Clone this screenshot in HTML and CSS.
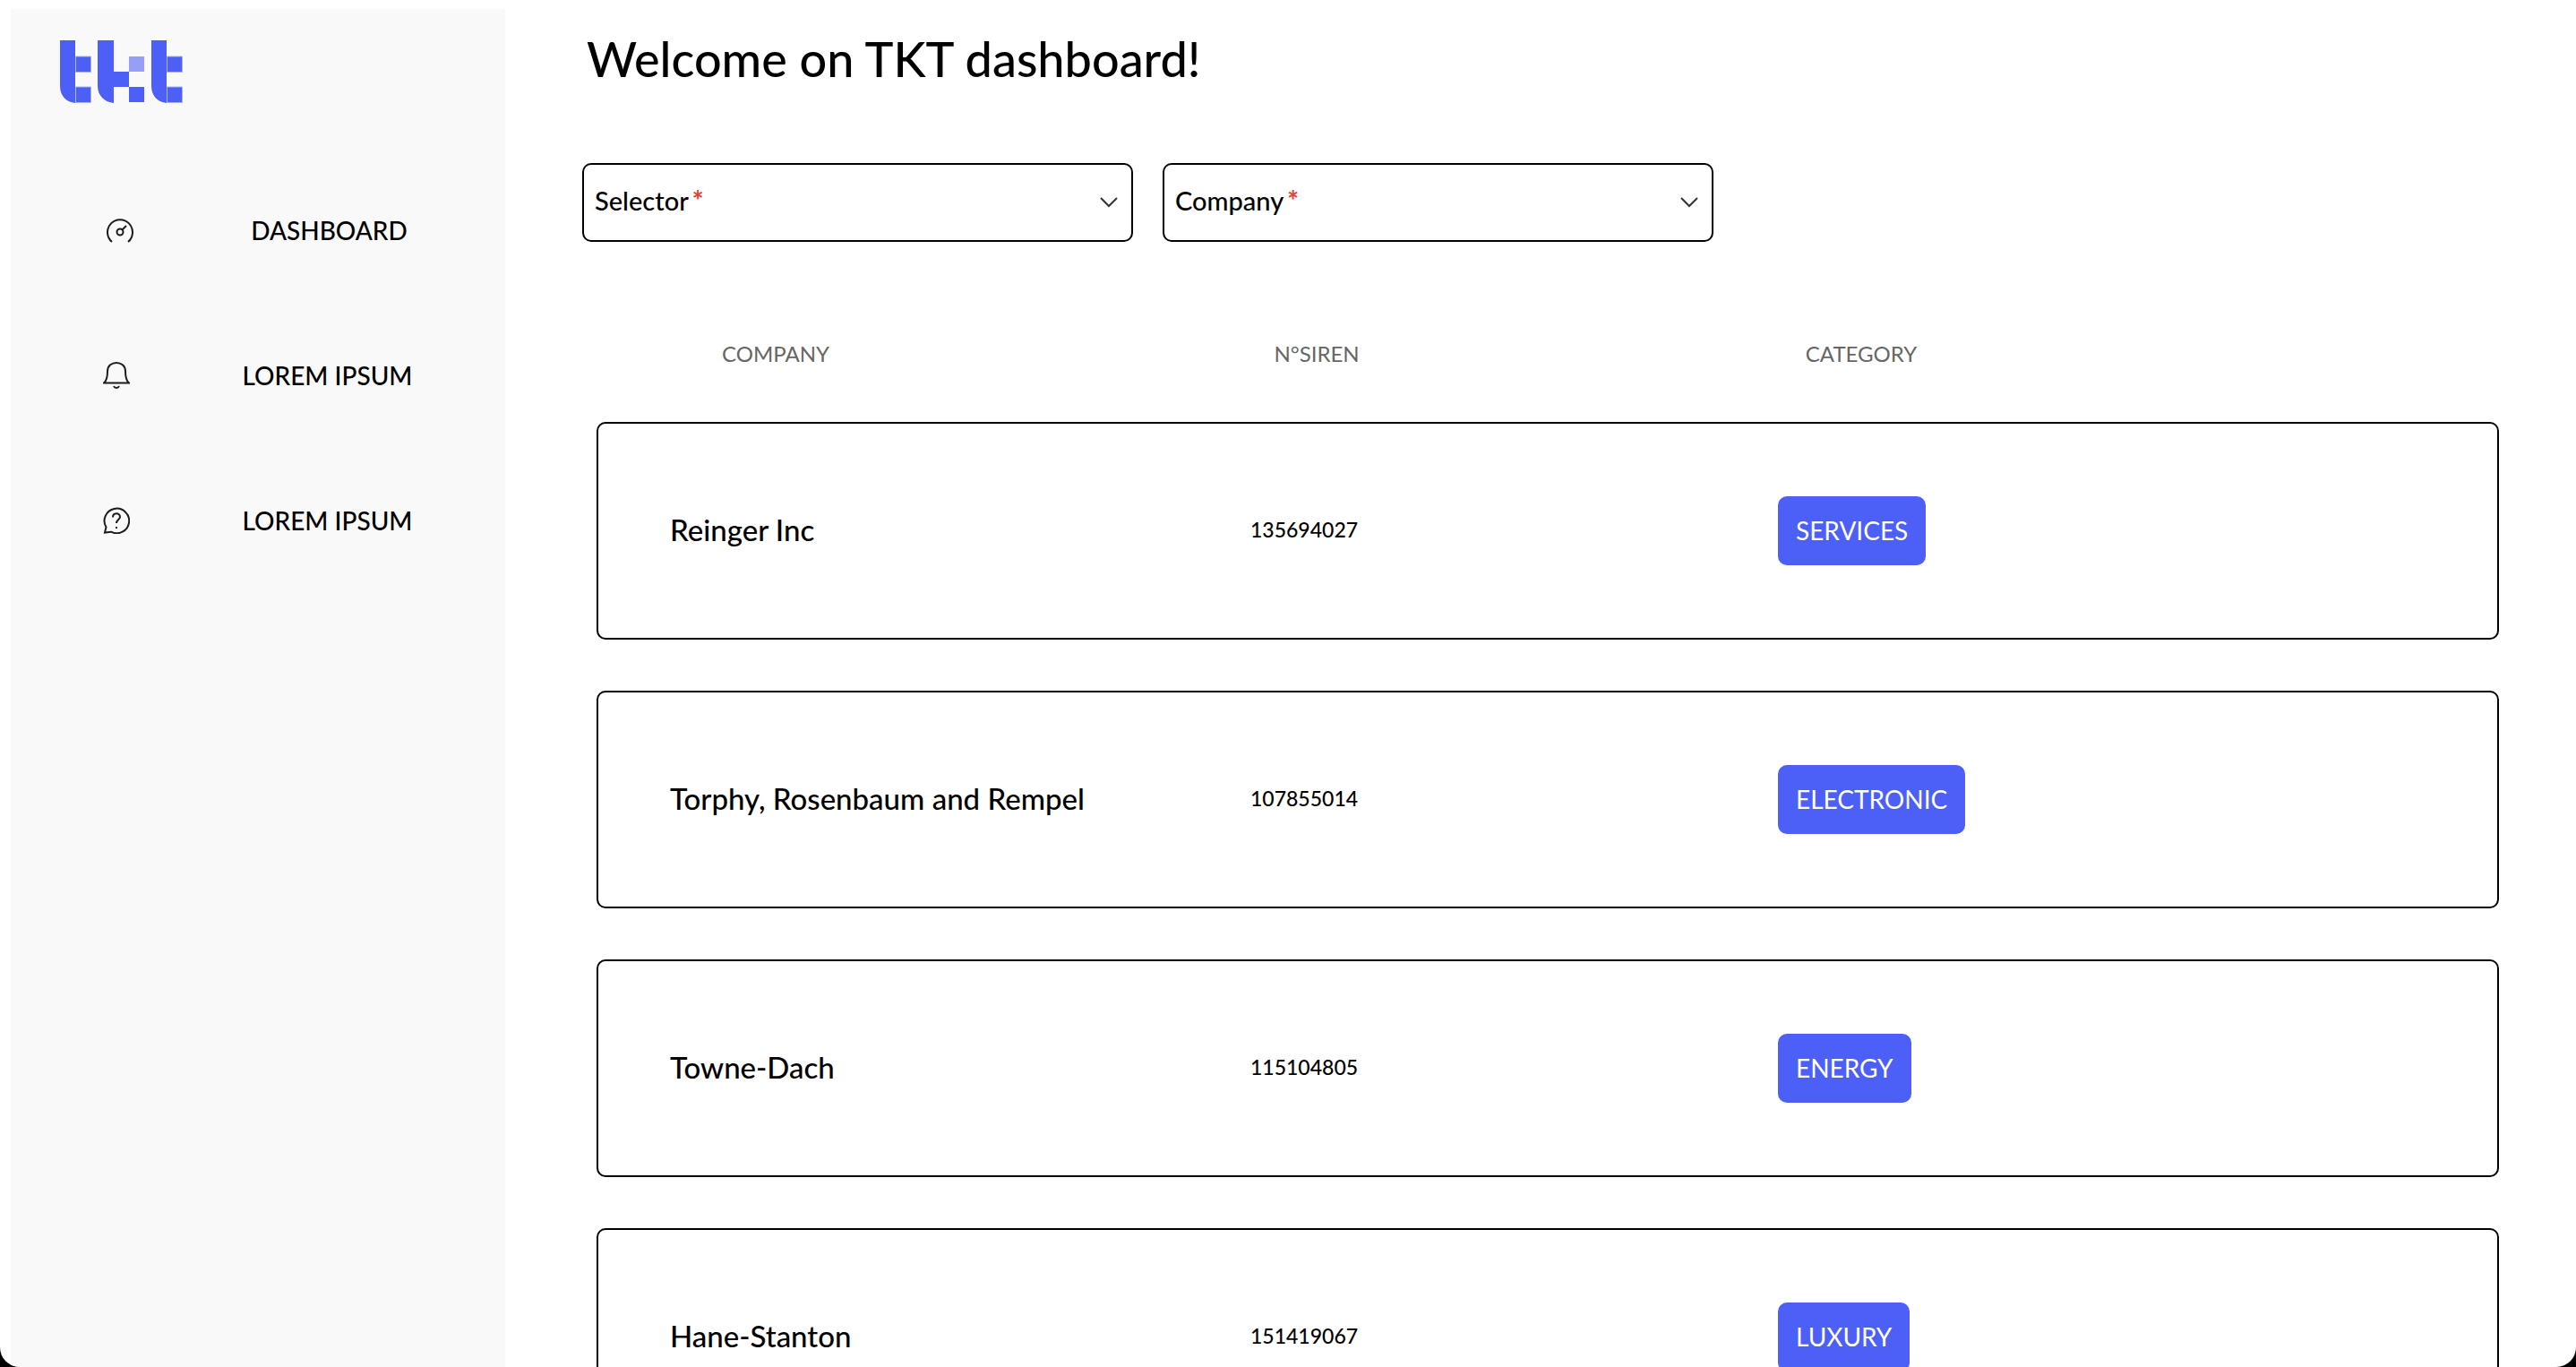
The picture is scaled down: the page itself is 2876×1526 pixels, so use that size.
FILE: index.html
```html
<!DOCTYPE html>
<html lang="en">
<head>
<meta charset="utf-8">
<title>TKT dashboard</title>
<link rel="stylesheet" href="styles.css">
</head>
<body>
<div class="app">
  <aside class="sidebar">
    <a class="logo" href="#" aria-label="tkt">
      <svg width="138" height="70" viewBox="0 0 138 70" fill="#4c60f8" stroke="#a9b2fb" stroke-width="1">
        <path stroke="none" d="M0 0H17V70C7 69 0 62 0 51ZM42 0H60V70C50 69 42 62 42 51ZM102 0H119V70C109 69 102 62 102 51Z"/>
        <path d="M17.500 18H34.500V35.500H17.500ZM17.500 52H34.500V69.500H17.500ZM119.500 18H136.500V35.500H119.500ZM119.500 52H136.500V69.500H119.500Z"/>
        <path stroke="none" d="M60 35H77V52H60ZM77 52H94V69H77Z"/>
        <path stroke="none" fill="#979ef8" d="M77 18H94V35H77Z"/>
      </svg>
    </a>
    <nav class="nav">
      <a class="nav-item" href="#">
        <svg class="nav-icon nav-icon-inset" viewBox="0 0 30 30"><path d="M6 28A14 14 0 1 1 24 28"/><circle cx="15" cy="17" r="3.500"/><path d="M17.500 14.500L22 10"/></svg>
        <span class="nav-label">DASHBOARD</span>
      </a>
      <a class="nav-item" href="#">
        <svg class="nav-icon" viewBox="0 0 30 30"><path d="M1 23.500H29C26 21 25 17 25 10.500C25 4 20 1 15 1S5 4 5 10.500C5 17 4 21 1 23.500ZM12 27C13 29.500 17 29.500 18 27"/></svg>
        <span class="nav-label">LOREM IPSUM</span>
      </a>
      <a class="nav-item" href="#">
        <svg class="nav-icon" viewBox="0 0 30 30"><path d="M2 28.500L3.500 22.500A13.800 13.800 0 1 1 9 27.700Z"/><path d="M11 11.500C11 6 19 6 19 11C19 14 15 14 15 18M15 22V24"/></svg>
        <span class="nav-label">LOREM IPSUM</span>
      </a>
    </nav>
  </aside>
  <main class="main">
    <h1 class="title">Welcome on TKT dashboard!</h1>
    <div class="filters">
      <div class="field">
        <select class="select" id="selector" required><option value=""></option></select>
        <label class="field-label" for="selector">Selector<span class="required">*</span></label>
        <svg class="chevron" viewBox="0 0 20 12"><path d="M1 1L10 10L19 1"/></svg>
      </div>
      <div class="field">
        <select class="select" id="company" required><option value=""></option></select>
        <label class="field-label" for="company">Company<span class="required">*</span></label>
        <svg class="chevron" viewBox="0 0 20 12"><path d="M1 1L10 10L19 1"/></svg>
      </div>
    </div>
    <table class="companies">
      <thead>
        <tr><th>COMPANY</th><th>N°SIREN</th><th>CATEGORY</th></tr>
      </thead>
      <tbody>
        <tr><td class="name">Reinger Inc</td><td class="siren">135694027</td><td><span class="tag">SERVICES</span></td></tr>
        <tr><td class="name">Torphy, Rosenbaum and Rempel</td><td class="siren">107855014</td><td><span class="tag">ELECTRONIC</span></td></tr>
        <tr><td class="name">Towne-Dach</td><td class="siren">115104805</td><td><span class="tag">ENERGY</span></td></tr>
        <tr><td class="name">Hane-Stanton</td><td class="siren">151419067</td><td><span class="tag">LUXURY</span></td></tr>
      </tbody>
    </table>
  </main>
</div>
</body>
</html>
```
FILE: styles.css
```css
* { box-sizing: border-box; }
html { background: #000; }
body {
  margin: 0;
  height: 100vh;
  overflow: hidden;
  background: #fff;
  border-radius: 0 0 22px 22px;
  font-family: "Avenir Next", Lato, sans-serif;
  font-weight: 500;
  font-size: 28px;
  color: #000;
}
.app { display: flex; height: 100%; padding: 10px 0 0 12px; overflow: hidden; }
.sidebar { flex: 0 0 552px; background: #f9f9f9; }
.logo { display: block; padding: 35px 55px 0; line-height: 0; }
.nav { display: flex; flex-direction: column; gap: 122px; padding-top: 122px; }
.nav-item { display: flex; align-items: center; height: 40px; padding-left: 103px; color: inherit; text-decoration: none; }
.nav-icon { width: 30px; height: 30px; flex: none; fill: none; stroke: #1c1c1c; stroke-width: 2; }
.nav-icon-inset { margin-left: 4px; }
.nav-label { flex: 1; text-align: center; padding-left: 22px; }
.main { flex: 1; padding: 0 86px; }
.title { margin: 24px 0 0 5px; font-size: 54px; line-height: 64px; font-weight: 500; }
.filters { display: flex; gap: 33px; margin-top: 84px; }
.field { display: grid; width: 615px; height: 88px; }
.field > * { grid-area: 1 / 1; }
.select {
  appearance: none;
  width: 100%; height: 100%;
  background: #fff; border: 2px solid #000; border-radius: 10px;
  font: inherit; color: inherit;
}
.field-label { align-self: center; justify-self: start; padding: 0 0 4px 14px; font-size: 29px; line-height: 36px; pointer-events: none; }
.required { color: #d84b3c; font-weight: 900; font-size: 30px; line-height: 24px; margin-left: 4px; }
.chevron { align-self: center; justify-self: end; margin-right: 17px; width: 20px; height: 12px; fill: none; stroke: #333; stroke-width: 2; pointer-events: none; }
.companies { display: block; margin: 104px 0 0 16px; }
.companies thead, .companies tbody { display: block; }
.companies tr { display: grid; grid-template-columns: 648px 589px 1fr; align-items: center; }
.companies th, .companies td { padding: 0; text-align: left; }
.companies thead tr { grid-template-columns: 600px 608px 608px; height: 40px; margin: 0 0 57px -100px; }
.companies th { font-size: 24px; font-weight: 400; color: #666; text-align: center; }
.companies tbody { display: flex; flex-direction: column; gap: 57px; }
.companies tbody tr { height: 243px; border: 2px solid #000; border-radius: 10px; padding-left: 80px; }
.companies .name { font-size: 33px; padding-bottom: 4px; }
.companies .siren { font-size: 23px; padding-bottom: 4px; }
.tag { display: inline-block; padding: 0 20px; line-height: 77px; border-radius: 10px; background: #4c60f8; color: #fff; font-weight: 400; }
```
